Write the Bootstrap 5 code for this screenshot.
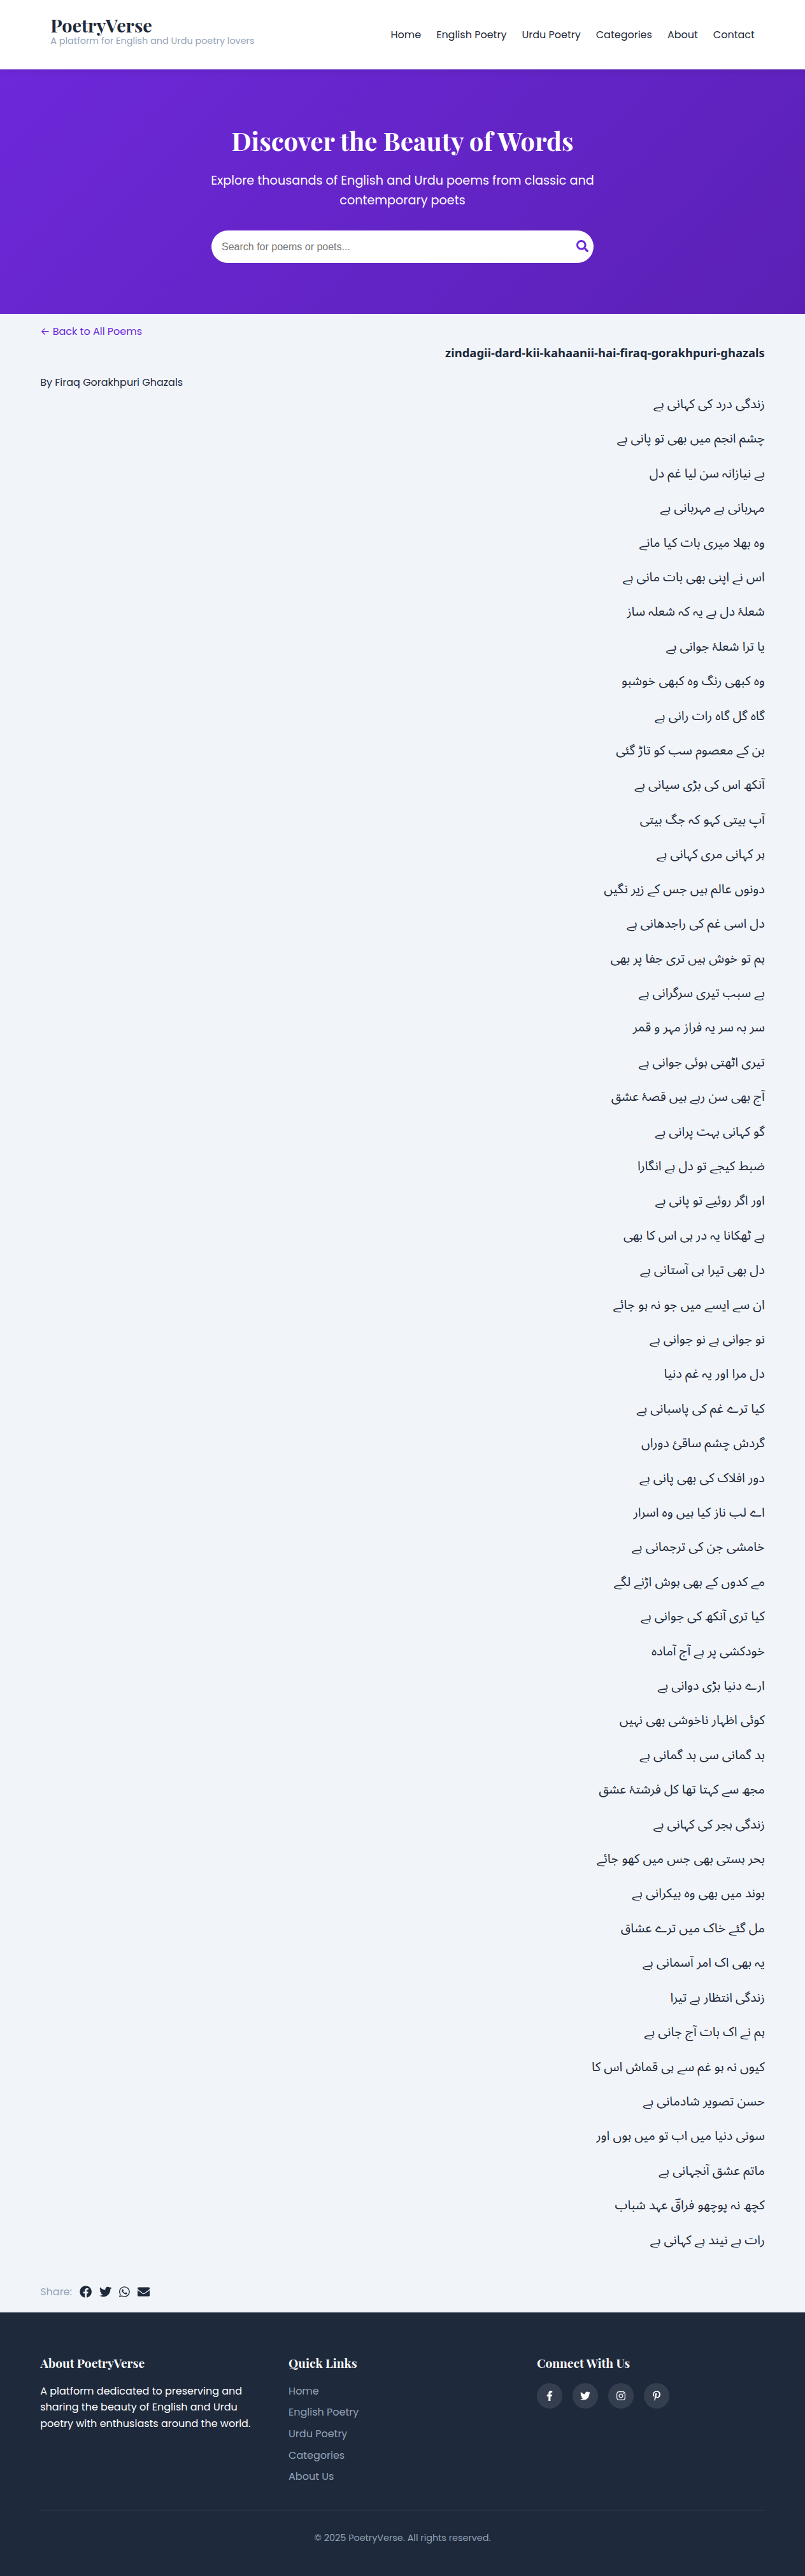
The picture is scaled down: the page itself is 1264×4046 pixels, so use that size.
<!DOCTYPE html>
<html lang="en">
<head>
  <meta charset="UTF-8">
  <meta name="viewport" content="width=device-width, initial-scale=1.0">
  <title>PoetryVerse</title>
  <link href="https://cdn.jsdelivr.net/npm/bootstrap@5.3.0/dist/css/bootstrap.min.css" rel="stylesheet">
  <style>
    :root {
      --purple: #6d28d9;
      --purple-dark: #5b21b6;
      --ink: #1e293b;
      --muted: #94a3b8;
    }
    body {
      background: #f1f5f9;
      color: var(--ink);
      font-family: 'Poppins', 'Inter', sans-serif;
    }
    a { text-decoration: none; }
    svg { fill: currentColor; display: block; }
    .serif {
      font-family: 'Playfair Display', 'Liberation Serif', serif;
      font-weight: 700;
    }
    .page-x { padding-left: 5%; padding-right: 5%; }

    /* Header */
    .site-header {
      height: 109px;
      padding: 0 79.2px;
      box-shadow: 0 2px 10px rgba(0, 0, 0, .1);
      z-index: 2;
    }
    .site-brand { padding-bottom: 12px; }
    .site-name { font-size: 28.8px; line-height: 31px; color: var(--ink); }
    .site-tagline { font-size: 14.4px; line-height: 18px; color: var(--muted); margin: 0; }
    .site-nav { gap: 24px; }
    .site-nav a { color: var(--ink); }

    /* Hero */
    .hero {
      height: 384px;
      padding-top: 80px;
      background: linear-gradient(135deg, var(--purple), var(--purple-dark));
    }
    .hero h1 { font-size: 40px; line-height: 64px; margin-bottom: 16px; }
    .hero p { width: 604px; font-size: 19.2px; line-height: 30.72px; margin-bottom: 32px; }
    .search-box { width: 600px; height: 51px; }
    .search-box input {
      font: 16px 'Liberation Sans', Arial, sans-serif;
      padding: 0 0 0 16px;
      outline: 0;
    }
    .search-box input::placeholder { color: #757575; }
    .search-box button { color: var(--purple); padding: 0 8px 3px; }

    /* Poem */
    .poem { height: 3139px; padding-top: 16px; }
    .back-link { color: var(--purple); }
    .poem-title { font: 700 18.45px/30px 'Noto Sans', sans-serif; margin: 6px 0 20px; }
    .poem-lines { font: 20px/54.4px 'Noto Sans Arabic', 'DejaVu Sans', sans-serif; margin: -5px 0 22px; }
    .poem-lines p { margin: 0; }
    .share-bar { border-top: 1px solid #e9edf2; padding-top: 19px; gap: 12px; }
    .share-label { color: var(--muted); }

    /* Footer */
    .site-footer { background: var(--ink); height: 414px; padding-top: 64px; }
    .site-footer .row { --bs-gutter-x: 32px; }
    .site-footer h3 { font-size: 19.2px; line-height: 30.72px; margin-bottom: 16px; }
    .site-footer p { line-height: 25.6px; }
    .footer-links li { line-height: 25.6px; margin-bottom: 8px; }
    .footer-links a, .copyright { color: var(--muted); }
    .round-link { width: 40px; height: 40px; background: rgba(255, 255, 255, .1); }
    .copyright {
      border-top: 1px solid rgba(255, 255, 255, .1);
      margin-top: 31px;
      padding-top: 32px;
      font-size: 14.4px;
      line-height: 23px;
    }
  </style>
</head>
<body>
  <header class="site-header bg-white d-flex justify-content-between align-items-center position-relative">
    <div class="site-brand">
      <div class="site-name serif">PoetryVerse</div>
      <p class="site-tagline">A platform for English and Urdu poetry lovers</p>
    </div>
    <nav class="site-nav d-flex">
      <a href="#">Home</a>
      <a href="#">English Poetry</a>
      <a href="#">Urdu Poetry</a>
      <a href="#">Categories</a>
      <a href="#">About</a>
      <a href="#">Contact</a>
    </nav>
  </header>

  <section class="hero text-white text-center d-flex flex-column align-items-center">
    <h1 class="serif">Discover the Beauty of Words</h1>
    <p>Explore thousands of English and Urdu poems from classic and contemporary poets</p>
    <form class="search-box bg-white rounded-pill d-flex overflow-hidden">
      <input type="text" class="flex-grow-1 border-0 bg-transparent" placeholder="Search for poems or poets...">
      <button type="button" class="border-0 bg-transparent" aria-label="Search">
        <svg width="19.2" height="19.2" viewBox="0 0 512 512"><path d="M505 442.7L405.3 343c-4.5-4.5-10.6-7-17-7H372c27.6-35.3 44-79.7 44-128C416 93.1 322.9 0 208 0S0 93.1 0 208s93.1 208 208 208c48.3 0 92.7-16.4 128-44v16.3c0 6.4 2.5 12.5 7 17l99.7 99.7c9.4 9.4 24.6 9.4 33.9 0l28.3-28.3c9.4-9.4 9.4-24.6.1-34zM208 336c-70.7 0-128-57.2-128-128 0-70.7 57.2-128 128-128 70.7 0 128 57.2 128 128 0 70.7-57.2 128-128 128z"/></svg>
      </button>
    </form>
  </section>

  <main class="poem page-x">
    <a href="#" class="back-link d-block">← Back to All Poems</a>
    <h2 class="poem-title text-end">zindagii-dard-kii-kahaanii-hai-firaq-gorakhpuri-ghazals</h2>
    <div>By Firaq Gorakhpuri Ghazals</div>
    <div class="poem-lines" lang="ur" dir="rtl">
      <p>زندگی درد کی کہانی ہے</p>
      <p>چشم انجم میں بھی تو پانی ہے</p>
      <p>بے نیازانہ سن لیا غم دل</p>
      <p>مہربانی ہے مہربانی ہے</p>
      <p>وہ بھلا میری بات کیا مانے</p>
      <p>اس نے اپنی بھی بات مانی ہے</p>
      <p>شعلۂ دل ہے یہ کہ شعلہ ساز</p>
      <p>یا ترا شعلۂ جوانی ہے</p>
      <p>وہ کبھی رنگ وہ کبھی خوشبو</p>
      <p>گاہ گل گاہ رات رانی ہے</p>
      <p>بن کے معصوم سب کو تاڑ گئی</p>
      <p>آنکھ اس کی بڑی سیانی ہے</p>
      <p>آپ بیتی کہو کہ جگ بیتی</p>
      <p>ہر کہانی مری کہانی ہے</p>
      <p>دونوں عالم ہیں جس کے زیر نگیں</p>
      <p>دل اسی غم کی راجدھانی ہے</p>
      <p>ہم تو خوش ہیں تری جفا پر بھی</p>
      <p>بے سبب تیری سرگرانی ہے</p>
      <p>سر بہ سر یہ فراز مہر و قمر</p>
      <p>تیری اٹھتی ہوئی جوانی ہے</p>
      <p>آج بھی سن رہے ہیں قصۂ عشق</p>
      <p>گو کہانی بہت پرانی ہے</p>
      <p>ضبط کیجے تو دل ہے انگارا</p>
      <p>اور اگر روئیے تو پانی ہے</p>
      <p>ہے ٹھکانا یہ در ہی اس کا بھی</p>
      <p>دل بھی تیرا ہی آستانی ہے</p>
      <p>ان سے ایسے میں جو نہ ہو جائے</p>
      <p>نو جوانی ہے نو جوانی ہے</p>
      <p>دل مرا اور یہ غم دنیا</p>
      <p>کیا ترے غم کی پاسبانی ہے</p>
      <p>گردش چشم ساقئ دوراں</p>
      <p>دور افلاک کی بھی پانی ہے</p>
      <p>اے لب ناز کیا ہیں وہ اسرار</p>
      <p>خامشی جن کی ترجمانی ہے</p>
      <p>مے کدوں کے بھی ہوش اڑنے لگے</p>
      <p>کیا تری آنکھ کی جوانی ہے</p>
      <p>خودکشی پر ہے آج آمادہ</p>
      <p>ارے دنیا بڑی دوانی ہے</p>
      <p>کوئی اظہار ناخوشی بھی نہیں</p>
      <p>بد گمانی سی بد گمانی ہے</p>
      <p>مجھ سے کہتا تھا کل فرشتۂ عشق</p>
      <p>زندگی ہجر کی کہانی ہے</p>
      <p>بحر ہستی بھی جس میں کھو جائے</p>
      <p>بوند میں بھی وہ بیکرانی ہے</p>
      <p>مل گئے خاک میں ترے عشاق</p>
      <p>یہ بھی اک امر آسمانی ہے</p>
      <p>زندگی انتظار ہے تیرا</p>
      <p>ہم نے اک بات آج جانی ہے</p>
      <p>کیوں نہ ہو غم سے ہی قماش اس کا</p>
      <p>حسن تصویر شادمانی ہے</p>
      <p>سونی دنیا میں اب تو میں ہوں اور</p>
      <p>ماتم عشق آنجہانی ہے</p>
      <p>کچھ نہ پوچھو فراقؔ عہد شباب</p>
      <p>رات ہے نیند ہے کہانی ہے</p>
    </div>
    <div class="share-bar d-flex align-items-center">
      <span class="share-label">Share:</span>
      <a href="#" class="text-reset" aria-label="Facebook"><svg width="19.2" height="19.2" viewBox="0 0 512 512"><path d="M504 256C504 119 393 8 256 8S8 119 8 256c0 123.78 90.69 226.38 209.25 245V327.69h-63V256h63v-54.64c0-62.15 37-96.48 93.67-96.48 27.14 0 55.52 4.84 55.52 4.84v61h-31.28c-30.8 0-40.41 19.12-40.41 38.73V256h68.78l-11 71.69h-57.78V501C413.31 482.38 504 379.78 504 256z"/></svg></a>
      <a href="#" class="text-reset" aria-label="Twitter"><svg width="19.2" height="19.2" viewBox="0 0 512 512"><path d="M459.37 151.716c.325 4.548.325 9.097.325 13.645 0 138.72-105.583 298.558-298.558 298.558-59.452 0-114.68-17.219-161.137-47.106 8.447.974 16.568 1.299 25.34 1.299 49.055 0 94.213-16.568 130.274-44.832-46.132-.975-84.792-31.188-98.112-72.772 6.498.974 12.995 1.624 19.818 1.624 9.421 0 18.843-1.3 27.614-3.573-48.081-9.747-84.143-51.98-84.143-102.985v-1.299c13.969 7.797 30.214 12.67 47.431 13.319-28.264-18.843-46.781-51.005-46.781-87.391 0-19.492 5.197-37.36 14.294-52.954 51.655 63.675 129.3 105.258 216.365 109.807-1.624-7.797-2.599-15.918-2.599-24.04 0-57.828 46.782-104.934 104.934-104.934 30.213 0 57.502 12.67 76.67 33.137 23.715-4.548 46.456-13.32 66.599-25.34-7.798 24.366-24.366 44.833-46.132 57.827 21.117-2.273 41.584-8.122 60.426-16.243-14.292 20.791-32.161 39.308-52.628 54.253z"/></svg></a>
      <a href="#" class="text-reset" aria-label="WhatsApp"><svg width="16.8" height="19.2" viewBox="0 0 448 512"><path d="M380.9 97.1C339 55.1 283.2 32 223.9 32c-122.4 0-222 99.6-222 222 0 39.1 10.2 77.3 29.6 111L0 480l117.7-30.9c32.4 17.7 68.9 27 106.1 27h.1c122.3 0 224.1-99.6 224.1-222 0-59.3-25.2-115-67.1-157zm-157 341.6c-33.2 0-65.7-8.9-94-25.7l-6.7-4-69.8 18.3L72 359.2l-4.4-7c-18.5-29.4-28.2-63.3-28.2-98.2 0-101.7 82.8-184.5 184.6-184.5 49.3 0 95.6 19.2 130.4 54.1 34.8 34.9 56.2 81.2 56.1 130.5 0 101.8-84.9 184.6-186.6 184.6zm101.2-138.2c-5.5-2.8-32.8-16.2-37.9-18-5.1-1.9-8.8-2.8-12.5 2.8-3.7 5.6-14.3 18-17.6 21.8-3.2 3.7-6.5 4.2-12 1.4-32.6-16.3-54-29.1-75.5-66-5.7-9.8 5.7-9.1 16.3-30.3 1.8-3.7.9-6.9-.5-9.7-1.4-2.8-12.5-30.1-17.1-41.2-4.5-10.8-9.1-9.3-12.5-9.5-3.2-.2-6.9-.2-10.6-.2-3.7 0-9.7 1.4-14.8 6.9-5.1 5.6-19.4 19-19.4 46.3 0 27.3 19.9 53.7 22.6 57.4 2.8 3.7 39.1 59.7 94.8 83.8 35.2 15.2 49 16.5 66.6 13.9 10.7-1.6 32.8-13.4 37.4-26.4 4.6-13 4.6-24.1 3.2-26.4-1.3-2.5-5-3.9-10.5-6.6z"/></svg></a>
      <a href="#" class="text-reset" aria-label="Email"><svg width="19.2" height="19.2" viewBox="0 0 512 512"><path d="M502.3 190.8c3.9-3.1 9.7-.2 9.7 4.7V400c0 26.5-21.5 48-48 48H48c-26.5 0-48-21.5-48-48V195.6c0-5 5.7-7.8 9.7-4.7 22.4 17.4 52.1 39.5 154.1 113.6 21.1 15.4 56.7 47.8 92.2 47.6 35.7.3 72-32.8 92.3-47.6 102-74.1 131.6-96.3 154-113.7zM256 320c23.2.4 56.6-29.2 73.4-41.4 132.7-96.3 142.8-104.7 173.4-128.7 5.8-4.5 9.2-11.5 9.2-18.9v-19c0-26.5-21.5-48-48-48H48c-26.5 0-48 21.5-48 48v19c0 7.4 3.4 14.3 9.2 18.9 30.6 23.9 40.7 32.4 173.4 128.7 16.8 12.2 50.2 41.8 73.4 41.4z"/></svg></a>
    </div>
  </main>

  <footer class="site-footer page-x text-white">
    <div class="row row-cols-3">
      <div>
        <h3 class="serif">About PoetryVerse</h3>
        <p>A platform dedicated to preserving and sharing the beauty of English and Urdu poetry with enthusiasts around the world.</p>
      </div>
      <div>
        <h3 class="serif">Quick Links</h3>
        <ul class="footer-links list-unstyled mb-0">
          <li><a href="#">Home</a></li>
          <li><a href="#">English Poetry</a></li>
          <li><a href="#">Urdu Poetry</a></li>
          <li><a href="#">Categories</a></li>
          <li><a href="#">About Us</a></li>
        </ul>
      </div>
      <div>
        <h3 class="serif">Connect With Us</h3>
        <div class="d-flex gap-3">
          <a href="#" class="round-link rounded-circle text-white d-flex align-items-center justify-content-center" aria-label="Facebook"><svg width="10" height="16" viewBox="0 0 320 512"><path d="M279.14 288l14.22-92.66h-88.91v-60.13c0-25.35 12.42-50.06 52.24-50.06h40.42V6.26S260.43 0 225.36 0c-73.22 0-121.08 44.38-121.08 124.72v70.62H22.89V288h81.39v224h100.17V288z"/></svg></a>
          <a href="#" class="round-link rounded-circle text-white d-flex align-items-center justify-content-center" aria-label="Twitter"><svg width="16" height="16" viewBox="0 0 512 512"><path d="M459.37 151.716c.325 4.548.325 9.097.325 13.645 0 138.72-105.583 298.558-298.558 298.558-59.452 0-114.68-17.219-161.137-47.106 8.447.974 16.568 1.299 25.34 1.299 49.055 0 94.213-16.568 130.274-44.832-46.132-.975-84.792-31.188-98.112-72.772 6.498.974 12.995 1.624 19.818 1.624 9.421 0 18.843-1.3 27.614-3.573-48.081-9.747-84.143-51.98-84.143-102.985v-1.299c13.969 7.797 30.214 12.67 47.431 13.319-28.264-18.843-46.781-51.005-46.781-87.391 0-19.492 5.197-37.36 14.294-52.954 51.655 63.675 129.3 105.258 216.365 109.807-1.624-7.797-2.599-15.918-2.599-24.04 0-57.828 46.782-104.934 104.934-104.934 30.213 0 57.502 12.67 76.67 33.137 23.715-4.548 46.456-13.32 66.599-25.34-7.798 24.366-24.366 44.833-46.132 57.827 21.117-2.273 41.584-8.122 60.426-16.243-14.292 20.791-32.161 39.308-52.628 54.253z"/></svg></a>
          <a href="#" class="round-link rounded-circle text-white d-flex align-items-center justify-content-center" aria-label="Instagram"><svg width="14" height="16" viewBox="0 0 448 512"><path d="M224.1 141c-63.6 0-114.9 51.3-114.9 114.9s51.3 114.9 114.9 114.9S339 319.5 339 255.9 287.7 141 224.1 141zm0 189.6c-41.1 0-74.7-33.5-74.7-74.7s33.5-74.7 74.7-74.7 74.7 33.5 74.7 74.7-33.6 74.7-74.7 74.7zm146.4-194.3c0 14.9-12 26.8-26.8 26.8-14.9 0-26.8-12-26.8-26.8s12-26.8 26.8-26.8 26.8 12 26.8 26.8zm76.1 27.2c-1.7-35.9-9.9-67.7-36.2-93.9-26.2-26.2-58-34.4-93.9-36.2-37-2.1-147.9-2.1-184.9 0-35.8 1.7-67.6 9.9-93.9 36.1s-34.4 58-36.2 93.9c-2.1 37-2.1 147.9 0 184.9 1.7 35.9 9.9 67.7 36.2 93.9s58 34.4 93.9 36.2c37 2.1 147.9 2.1 184.9 0 35.9-1.7 67.7-9.9 93.9-36.2 26.2-26.2 34.4-58 36.2-93.9 2.1-37 2.1-147.8 0-184.8zM398.8 388c-7.8 19.6-22.9 34.7-42.6 42.6-29.5 11.7-99.5 9-132.1 9s-102.7 2.6-132.1-9c-19.6-7.8-34.7-22.9-42.6-42.6-11.7-29.5-9-99.5-9-132.1s-2.6-102.7 9-132.1c7.8-19.6 22.9-34.7 42.6-42.6 29.5-11.7 99.5-9 132.1-9s102.7-2.6 132.1 9c19.6 7.8 34.7 22.9 42.6 42.6 11.7 29.5 9 99.5 9 132.1s2.7 102.7-9 132.1z"/></svg></a>
          <a href="#" class="round-link rounded-circle text-white d-flex align-items-center justify-content-center" aria-label="Pinterest"><svg width="12" height="16" viewBox="0 0 384 512"><path d="M204 6.5C101.4 6.5 0 74.9 0 185.6 0 256 39.6 296 63.6 296c9.9 0 15.6-27.6 15.6-35.4 0-9.3-23.7-29.1-23.7-67.8 0-80.4 61.2-137.4 140.4-137.4 68.1 0 118.5 38.7 118.5 109.8 0 53.1-21.3 152.7-90.3 152.7-24.9 0-46.2-18-46.2-43.8 0-37.8 26.4-74.4 26.4-113.4 0-66.2-93.9-54.2-93.9 25.8 0 16.8 2.1 35.4 9.6 50.7-13.8 59.4-42 147.9-42 209.1 0 18.9 2.7 37.5 4.5 56.4 3.4 3.8 1.7 3.4 6.9 1.5 50.4-69 48.6-82.5 71.4-172.8 12.3 23.4 44.1 36 69.3 36 106.2 0 153.9-103.5 153.9-196.8C384 71.3 298.2 6.5 204 6.5z"/></svg></a>
        </div>
      </div>
    </div>
    <div class="copyright text-center">© 2025 PoetryVerse. All rights reserved.</div>
  </footer>

  <script src="https://cdn.jsdelivr.net/npm/bootstrap@5.3.0/dist/js/bootstrap.bundle.min.js"></script>
</body>
</html>
